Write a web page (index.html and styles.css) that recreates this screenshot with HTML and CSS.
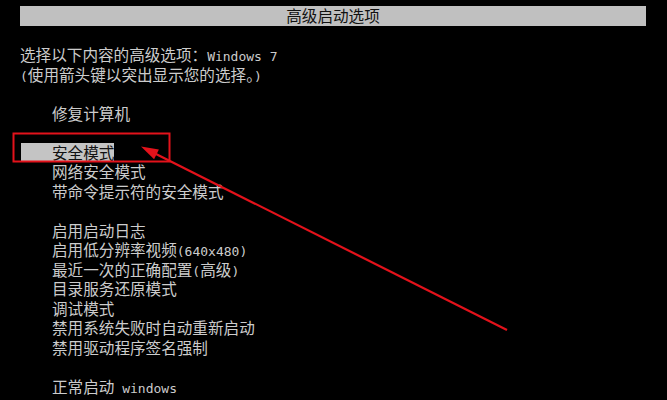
FILE: index.html
```html
<!DOCTYPE html>
<html lang="zh-CN">
<head>
<meta charset="utf-8">
<title>高级启动选项</title>
<link rel="stylesheet" href="styles.css">
</head>
<body>
<div class="screen">
  <div class="title">高级启动选项</div>
  <div class="row"></div>
  <div class="row">选择以下内容的高级选项：<span class="l">Windows 7</span></div>
  <div class="row"><span class="l">(</span>使用箭头键以突出显示您的选择。<span class="l">)</span></div>
  <div class="row"></div>
  <div class="row item">修复计算机</div>
  <div class="row"></div>
  <div class="row item"><span class="sel">安全模式</span></div>
  <div class="row item">网络安全模式</div>
  <div class="row item">带命令提示符的安全模式</div>
  <div class="row"></div>
  <div class="row item">启用启动日志</div>
  <div class="row item">启用低分辨率视频<span class="l">(640x480)</span></div>
  <div class="row item">最近一次的正确配置<span class="l">(</span>高级<span class="l">)</span></div>
  <div class="row item">目录服务还原模式</div>
  <div class="row item">调试模式</div>
  <div class="row item">禁用系统失败时自动重新启动</div>
  <div class="row item">禁用驱动程序签名强制</div>
  <div class="row"></div>
  <div class="row item">正常启动<span class="l"> windows</span></div>
</div>
<svg class="annot" width="667" height="400" viewBox="0 0 667 400">
  <rect x="13.5" y="133.5" width="156" height="28" fill="none" stroke="#e3121b" stroke-width="2"/>
  <line x1="507" y1="330" x2="152" y2="152" stroke="#e3121b" stroke-width="2.2"/>
  <polygon points="141,146.5 154.1,159.2 158.9,149.5" fill="#e3121b"/>
</svg>
</body>
</html>
```

FILE: styles.css
```css
html, body {
  margin: 0;
  padding: 0;
  background: #000;
}
body {
  width: 667px;
  height: 400px;
  overflow: hidden;
  position: relative;
  font-family: "Noto Sans CJK SC", "Noto Sans", sans-serif;
  font-size: 15.6px;
  color: #cccccc;
}
.screen {
  padding: 6px 21px 0 20px;
  display: flex;
  flex-direction: column;
}
.title {
  background: #c0c0c0;
  color: #111;
  height: 19.5px;
  line-height: 19.5px;
  text-align: center;
  font-size: 15.6px;
}
.row {
  height: 19.5px;
  line-height: 19.5px;
  white-space: pre;
}
.item {
  padding-left: 32px;
}
.sel {
  display: inline-block;
  background: #c4c4c4;
  color: #111;
  margin-left: -31px;
  padding-left: 31px;
  height: 18.5px;
  line-height: 19.5px;
}
.l {
  font-family: "DejaVu Sans Mono", "Liberation Mono", monospace;
  font-size: 13px;
}
.annot {
  position: absolute;
  left: 0;
  top: 0;
}
```
